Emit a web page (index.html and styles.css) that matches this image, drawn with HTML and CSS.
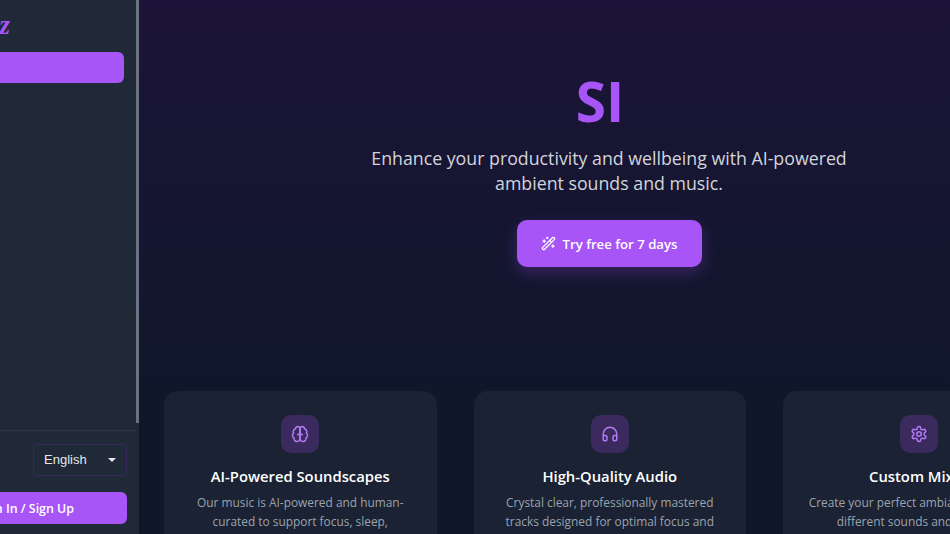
FILE: index.html
```html
<!DOCTYPE html>
<html lang="en">
<head>
<meta charset="utf-8">
<title>Soundscapes</title>
<link rel="stylesheet" href="styles.css">
</head>
<body>
<div class="app">
  <aside class="sidebar">
    <div class="side-panel">
      <div class="side-top">
        <div class="logo">Buzz</div>
        <div class="new-btn"></div>
      </div>
      <div class="side-bottom">
        <div class="lang-row">
          <div class="select"><span>English</span><i class="caret"></i></div>
        </div>
        <div class="signin">Sign In / Sign Up</div>
      </div>
    </div>
    <div class="scroll-track"><div class="scroll-thumb"></div></div>
  </aside>
  <main class="main">
    <section class="hero">
      <h1 class="title">SI</h1>
      <p class="lead">Enhance your productivity and wellbeing with AI-powered ambient sounds and music.</p>
      <a class="cta">
        <svg class="cta-icon" viewBox="0 0 24 24" fill="none" stroke="currentColor" stroke-width="2" stroke-linecap="round" stroke-linejoin="round"><path d="m21.64 3.64-1.28-1.28a1.21 1.21 0 0 0-1.72 0L2.36 18.64a1.21 1.21 0 0 0 0 1.72l1.28 1.28a1.2 1.2 0 0 0 1.72 0L21.64 5.36a1.2 1.2 0 0 0 0-1.72"/><path d="m14 7 3 3"/><path d="M5 6v4"/><path d="M19 14v4"/><path d="M10 2v2"/><path d="M7 8H3"/><path d="M21 16h-4"/><path d="M11 3H9"/></svg>
        Try free for 7 days
      </a>
    </section>
    <section class="cards">
      <article class="card">
        <div class="icon-box"><svg viewBox="0 0 24 24" fill="none" stroke="currentColor" stroke-width="2" stroke-linecap="round" stroke-linejoin="round"><path d="M12 5a3 3 0 1 0-5.997.125 4 4 0 0 0-2.526 5.77 4 4 0 0 0 .556 6.588A4 4 0 1 0 12 18Z"/><path d="M12 5a3 3 0 1 1 5.997.125 4 4 0 0 1 2.526 5.77 4 4 0 0 1-.556 6.588A4 4 0 1 1 12 18Z"/><path d="M15 13a4.5 4.5 0 0 1-3-4 4.5 4.5 0 0 1-3 4"/></svg></div>
        <h3>AI-Powered Soundscapes</h3>
        <p>Our music is AI-powered and human-curated to support focus, sleep, relaxation and meditation.</p>
      </article>
      <article class="card">
        <div class="icon-box"><svg viewBox="0 0 24 24" fill="none" stroke="currentColor" stroke-width="2" stroke-linecap="round" stroke-linejoin="round"><path d="M3 14h3a2 2 0 0 1 2 2v3a2 2 0 0 1-2 2H5a2 2 0 0 1-2-2v-7a9 9 0 0 1 18 0v7a2 2 0 0 1-2 2h-1a2 2 0 0 1-2-2v-3a2 2 0 0 1 2-2h3"/></svg></div>
        <h3>High-Quality Audio</h3>
        <p>Crystal clear, professionally mastered tracks designed for optimal focus and calm listening.</p>
      </article>
      <article class="card">
        <div class="icon-box"><svg viewBox="0 0 24 24" fill="none" stroke="currentColor" stroke-width="2" stroke-linecap="round" stroke-linejoin="round"><path d="M12.22 2h-.44a2 2 0 0 0-2 2v.18a2 2 0 0 1-1 1.73l-.43.25a2 2 0 0 1-2 0l-.15-.08a2 2 0 0 0-2.73.73l-.22.38a2 2 0 0 0 .73 2.73l.15.1a2 2 0 0 1 1 1.72v.51a2 2 0 0 1-1 1.74l-.15.09a2 2 0 0 0-.73 2.73l.22.38a2 2 0 0 0 2.73.73l.15-.08a2 2 0 0 1 2 0l.43.25a2 2 0 0 1 1 1.73V20a2 2 0 0 0 2 2h.44a2 2 0 0 0 2-2v-.18a2 2 0 0 1 1-1.73l.43-.25a2 2 0 0 1 2 0l.15.08a2 2 0 0 0 2.73-.73l.22-.39a2 2 0 0 0-.73-2.73l-.15-.08a2 2 0 0 1-1-1.74v-.5a2 2 0 0 1 1-1.74l.15-.09a2 2 0 0 0 .73-2.73l-.22-.38a2 2 0 0 0-2.73-.73l-.15.08a2 2 0 0 1-2 0l-.43-.25a2 2 0 0 1-1-1.73V4a2 2 0 0 0-2-2z"/><circle cx="12" cy="12" r="3"/></svg></div>
        <h3>Custom Mixes</h3>
        <p>Create your perfect ambiance by mixing different sounds and settings.</p>
      </article>
    </section>
  </main>
</div>
</body>
</html>
```

FILE: styles.css
```css
* { box-sizing: border-box; }
html, body { margin: 0; height: 100%; overflow: hidden; }
body { font-family: "Open Sans", "Noto Sans", sans-serif; background: #0f172a; color: #fff; }
.app { display: flex; width: 950px; height: 534px; overflow: hidden; }

.sidebar { flex: 0 0 139px; height: 534px; display: flex; background: #1f2937; overflow: hidden; }
.side-panel { flex: 0 0 136px; height: 534px; display: flex; flex-direction: column; justify-content: space-between; overflow: hidden; }
.scroll-track { flex: 0 0 3px; background: #1f2937; }
.scroll-thumb { height: 423px; background: #6b7280; }

.side-top { margin-left: -140px; width: 264px; padding-top: 13px; }
.logo { font-family: "Liberation Serif", serif; font-weight: 700; font-style: italic; font-size: 27px; line-height: 25px; color: #a855f7; text-align: right; padding-right: 114px; }
.new-btn { margin-top: 14px; height: 31px; border-radius: 6px; background: #a855f7; }

.side-bottom { border-top: 1px solid #2c3644; padding: 13px 9px 10px 0; height: 104px; display: flex; flex-direction: column; align-items: flex-end; gap: 16px; }
.lang-row { display: flex; justify-content: flex-end; }
.select { width: 94px; height: 32px; border: 1px solid #39265f; border-radius: 4px; background: #1f2937; display: flex; align-items: center; justify-content: space-between; padding: 0 10px 2px; font-family: "Liberation Sans", sans-serif; font-size: 13px; color: #e5e7eb; }
.caret { width: 0; height: 0; margin-top: 2px; border-left: 4px solid transparent; border-right: 4px solid transparent; border-top: 4px solid #e5e7eb; }
.signin { width: 264px; height: 32px; border-radius: 6px; background: #a855f7; color: #fff; font-size: 12.4px; font-weight: 600; display: flex; align-items: center; justify-content: flex-end; padding-right: 53px; margin-left: -137px; flex: none; }

.main { flex: 0 0 940px; height: 534px; padding: 0 25px; background: linear-gradient(180deg, #1c1438 0%, #0f172a 78%); overflow: hidden; }
.hero { display: flex; flex-direction: column; align-items: center; padding-top: 66px; }
.title { margin: 0; font-size: 55px; line-height: 70px; font-weight: 700; color: #a855f7; padding-right: 18px; }
.lead { margin: 10px 0 0; width: 500px; text-align: center; font-size: 17.75px; line-height: 25px; color: #d1d5db; }
.cta { margin-top: 24px; width: 185px; height: 47px; border-radius: 10px; background: #a855f7; color: #fff; font-size: 13.2px; font-weight: 600; display: flex; align-items: center; justify-content: center; gap: 7px; box-shadow: 0 6px 16px rgba(168, 85, 247, 0.25); }
.cta-icon { width: 15px; height: 15px; }

.cards { margin-top: 124px; display: grid; grid-template-columns: repeat(3, 272.5px); gap: 37px; }
.card { background: #1a2233; border-radius: 14px; padding: 24px 25px; text-align: center; height: 230px; }
.icon-box { width: 38px; height: 38px; margin: 0 auto; border-radius: 10px; background: #3a2a5e; color: #b57bf7; display: flex; align-items: center; justify-content: center; }
.icon-box svg { width: 18px; height: 18px; }
.card h3 { margin: 13px 0 0; font-size: 14.8px; line-height: 20px; font-weight: 600; color: #fff; }
.card p { margin: 7px 0 0; font-size: 11.9px; line-height: 19.4px; color: #9ca3af; }
```
